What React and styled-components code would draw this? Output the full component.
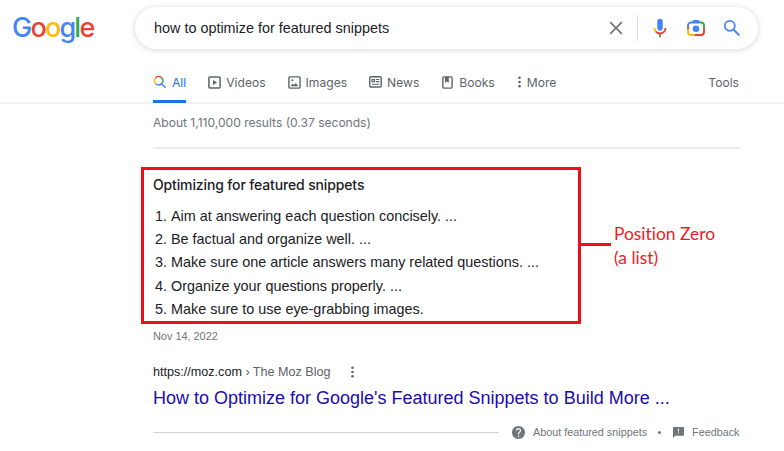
import React from "react";
import styled, { createGlobalStyle } from "styled-components";

const GlobalStyle = createGlobalStyle`
  * {
    box-sizing: border-box;
  }

  body {
    margin: 0;
    background: #fff;
    color: #202124;
    font-family: "Liberation Sans", Arial, sans-serif;
    overflow: hidden;
  }
`;

const Page = styled.div`
  width: 784px;
  height: 451px;
`;

const Header = styled.header`
  height: 104px;
  border-bottom: 2px solid #f0f1f2;
`;

const SearchRow = styled.div`
  display: flex;
  align-items: flex-start;
  padding: 7px 0 0 12px;
`;

const Logo = styled.a`
  width: 123px;
  padding-top: 4px;
  font-family: Inter, sans-serif;
  font-size: 27px;
  font-weight: 500;
  line-height: 34px;
  letter-spacing: -1.8px;
`;

const LogoLetter = styled.span`
  color: ${({ $color }) => $color};
`;

const SearchBar = styled.div`
  display: flex;
  align-items: center;
  width: 623px;
  height: 42px;
  padding: 0 16px 0 19px;
  border-radius: 21px;
  background: #fff;
  box-shadow: 0 1px 5px 1px rgba(64, 60, 67, 0.16);
`;

const Query = styled.span`
  flex: 1;
  font-size: 14.4px;
  white-space: nowrap;
`;

const Divider = styled.span`
  width: 1px;
  height: 26px;
  margin: 0 11px;
  background: #dadce0;
`;

const BarIcon = styled.svg`
  flex: none;
  width: ${({ $size }) => $size || 20}px;
  height: ${({ $size }) => $size || 20}px;
  margin-left: ${({ $gap }) => $gap || 0}px;
`;

const Tabs = styled.nav`
  display: flex;
  align-items: stretch;
  height: 36px;
  margin: 18px 45px 0 153px;
`;

const Tab = styled.a`
  display: flex;
  align-items: center;
  gap: ${({ $gap }) => $gap || 4}px;
  margin-right: ${({ $space }) => $space || 0}px;
  padding-bottom: 3px;
  border-bottom: 3px solid ${({ $active }) => ($active ? "#1a73e8" : "transparent")};
  color: ${({ $active }) => ($active ? "#1a73e8" : "#5f6368")};
  font-family: Inter, sans-serif;
  font-size: 12.1px;
  white-space: nowrap;
`;

const Tools = styled(Tab)`
  margin-left: auto;
`;

const Main = styled.main`
  width: 599px;
  margin-left: 141px;
`;

const Stats = styled.p`
  margin: 0 0 0 12px;
  padding-top: 11px;
  height: 45px;
  border-bottom: 2px solid #ebebeb;
  color: #70757a;
  font-family: Inter, sans-serif;
  font-size: 12.05px;
  line-height: 16px;
`;

const SnippetRow = styled.section`
  display: flex;
  margin-top: 18px;
`;

const Snippet = styled.div`
  width: 440px;
  height: 157px;
  padding: 5px 0 0 9px;
  border: 3px solid #ed1018;
`;

const SnippetTitle = styled.h2`
  margin: 0 0 9.6px;
  font-family: Inter, sans-serif;
  font-size: 14px;
  font-weight: 500;
  line-height: 20px;
  letter-spacing: -0.14px;
`;

const Steps = styled.ol`
  margin: 0;
  padding-left: 18px;
  font-size: 14.4px;
  line-height: 23.4px;
`;

const Connector = styled.span`
  width: 30px;
  height: 3px;
  margin-top: 76px;
  background: #ed1018;
`;

const Callout = styled.p`
  margin: 55px 0 0 3px;
  color: #ed1c24;
  font-family: Lato, sans-serif;
  font-size: 17.4px;
  font-variant-ligatures: none;
  line-height: 23.5px;
  white-space: nowrap;
`;

const Result = styled.article`
  padding-left: 12px;
`;

const PublishDate = styled.div`
  margin-top: 4px;
  color: #70757a;
  font-size: 10.9px;
  line-height: 16px;
`;

const Source = styled.div`
  display: flex;
  align-items: center;
  margin-top: 20px;
  height: 16px;
  color: #5f6368;
  font-size: 12.6px;
  white-space: pre;
`;

const Domain = styled.span`
  color: #202124;
`;

const ResultTitle = styled.h3`
  margin: 7px 0 0;
  color: #1a0dab;
  font-size: 18px;
  font-weight: 400;
  line-height: 22px;
  white-space: nowrap;
`;

const SnippetFooter = styled.footer`
  display: flex;
  align-items: center;
  height: 16px;
  margin-top: 15px;
  color: #70757a;
  font-size: 10.8px;
  white-space: nowrap;
`;

const Rule = styled.span`
  width: 346px;
  height: 1px;
  margin-right: 13px;
  background: #d2d3d8;
`;

const FooterLabel = styled.span`
  margin-left: 8px;
`;

const Dot = styled.span`
  width: 3px;
  height: 3px;
  margin: 0 12px 0 11px;
  border-radius: 50%;
  background: #70757a;
`;

const logoLetters = [
  ["G", "#4285f4"],
  ["o", "#ea4335"],
  ["o", "#fbbc05"],
  ["g", "#4285f4"],
  ["l", "#34a853"],
  ["e", "#ea4335"],
];

const steps = [
  "Aim at answering each question concisely. ...",
  "Be factual and organize well. ...",
  "Make sure one article answers many related questions. ...",
  "Organize your questions properly. ...",
  "Make sure to use eye-grabbing images.",
];

const ClearIcon = () => (
  <BarIcon viewBox="0 0 20 20" fill="none" stroke="#70757a" strokeWidth="1.7">
    <path d="M4.2 4.2l11.6 11.6M15.8 4.2L4.2 15.8" />
  </BarIcon>
);

const MicIcon = () => (
  <BarIcon viewBox="0 0 24 24" $size={22}>
    <path fill="#4285f4" d="M12 15c1.66 0 3-1.31 3-2.97V4.98C15 3.34 13.66 2 12 2S9 3.34 9 4.98v7.05C9 13.69 10.34 15 12 15z" />
    <path fill="#34a853" d="M11 18.08h2V22h-2z" />
    <path fill="#fbbc05" d="M7.05 16.87C5.78 15.59 5 13.83 5 12h2c0 1.45.56 2.42 1.47 3.38v.32l-1.15 1.18z" />
    <path fill="#ea4335" d="M12 16.93a4.97 5.25 0 0 1-3.54-1.55l-1.41 1.49C8.31 18.14 9.99 19 12 19c3.87 0 6.99-2.92 6.99-7H17c0 2.92-2.24 4.93-5 4.93z" />
  </BarIcon>
);

const LensIcon = () => (
  <BarIcon viewBox="0 0 20 20" $gap={15} fill="none" strokeWidth="1.9">
    <path stroke="#4285f4" d="M2 9V7.5a3 3 0 0 1 3-3h9" />
    <path fill="#4285f4" d="M5.5 4.5L7.5 2h5l2 2.5z" />
    <path stroke="#34a853" d="M14 4.5h1a3 3 0 0 1 3 3V10" />
    <path stroke="#ea4335" d="M2 9v2.5" />
    <path stroke="#ea4335" d="M18 10v4a3 3 0 0 1-3 3H9" />
    <path stroke="#fbbc05" d="M2 11.5V14a3 3 0 0 0 3 3h4" />
    <circle cx="10" cy="10.7" r="3.3" fill="#4285f4" />
  </BarIcon>
);

const SearchIcon = () => (
  <BarIcon viewBox="0 0 20 20" $gap={16} fill="none" stroke="#4285f4" strokeWidth="1.8">
    <circle cx="7.8" cy="7.8" r="5" />
    <path d="M11.5 11.5l6 6" />
  </BarIcon>
);

const AllIcon = () => (
  <svg width="14" height="14" viewBox="0 0 14 14" fill="none" strokeWidth="1.5">
    <path stroke="#ea4335" d="M2.6 3A4.2 4.2 0 0 1 8.5 2.6" />
    <path stroke="#fbbc05" d="M2.6 3A4.2 4.2 0 0 0 2.7 8.8" />
    <path stroke="#34a853" d="M8.5 2.6A4.2 4.2 0 0 1 9.1 8" />
    <path stroke="#4285f4" d="M2.7 8.8A4.2 4.2 0 0 0 9.1 8M8.6 8.7l4 4" />
  </svg>
);

const VideoIcon = () => (
  <svg width="13" height="13" viewBox="0 0 13 13" fill="none" stroke="#5f6368" strokeWidth="1.5">
    <rect x="0.9" y="0.9" width="11.2" height="11.2" rx="1" />
    <path d="M5 4v5l4-2.5z" fill="#5f6368" stroke="none" />
  </svg>
);

const ImageIcon = () => (
  <svg width="13" height="13" viewBox="0 0 13 13" fill="none" stroke="#5f6368" strokeWidth="1.4">
    <rect x="0.9" y="0.9" width="11.2" height="11.2" rx="1" />
    <path d="M2.6 10.2l2-2.6 1.5 1.5 1.7-2.2 2.6 3.3z" fill="#5f6368" stroke="none" />
    <circle cx="4.3" cy="4.3" r="1" fill="#5f6368" stroke="none" />
  </svg>
);

const NewsIcon = () => (
  <svg width="13" height="12" viewBox="0 0 13 12" fill="none" stroke="#5f6368" strokeWidth="1.4">
    <rect x="0.8" y="0.8" width="11.4" height="10.2" rx="1" />
    <path d="M3 3.6h2.6v2H3zM7 3.5h3.4M7 5.6h3.4M3 8.3h7.4" strokeWidth="1.1" />
  </svg>
);

const BookIcon = () => (
  <svg width="11" height="13" viewBox="0 0 11 13" fill="none" stroke="#5f6368" strokeWidth="1.4">
    <rect x="0.9" y="0.9" width="9.2" height="11.2" rx="1" />
    <path d="M3 1h3.8v5.8L4.9 5.4 3 6.8z" fill="#5f6368" stroke="none" />
  </svg>
);

const DotsIcon = ({ className }) => (
  <svg className={className} width="3" height="12" viewBox="0 0 3 12" fill="#5f6368">
    <circle cx="1.5" cy="1.8" r="1.3" />
    <circle cx="1.5" cy="6" r="1.3" />
    <circle cx="1.5" cy="10.2" r="1.3" />
  </svg>
);

const SourceMenu = styled(DotsIcon)`
  margin-left: 20px;
`;

const HelpIcon = () => (
  <svg width="13" height="13" viewBox="2 2 20 20" fill="#70757a">
    <path d="M12 2C6.48 2 2 6.48 2 12s4.48 10 10 10 10-4.48 10-10S17.52 2 12 2zm1 17h-2v-2h2v2zm2.07-7.75l-.9.92C13.45 12.9 13 13.5 13 15h-2v-.5c0-1.1.45-2.1 1.17-2.83l1.24-1.26c.37-.36.59-.86.59-1.41 0-1.1-.9-2-2-2s-2 .9-2 2H8c0-2.21 1.79-4 4-4s4 1.79 4 4c0 .88-.36 1.68-.93 2.25z" />
  </svg>
);

const FeedbackIcon = () => (
  <svg width="11" height="11" viewBox="2 2 20 20" fill="#70757a">
    <path d="M20 2H4c-1.1 0-2 .9-2 2v18l4-4h14c1.1 0 2-.9 2-2V4c0-1.1-.9-2-2-2zm-7 12h-2v-2h2v2zm0-4h-2V5h2v5z" />
  </svg>
);

const App = () => {
  return (
    <Page>
      <GlobalStyle />
      <Header>
        <SearchRow>
          <Logo>
            {logoLetters.map(([letter, color], index) => (
              <LogoLetter key={index} $color={color}>
                {letter}
              </LogoLetter>
            ))}
          </Logo>
          <SearchBar>
            <Query>how to optimize for featured snippets</Query>
            <ClearIcon />
            <Divider />
            <MicIcon />
            <LensIcon />
            <SearchIcon />
          </SearchBar>
        </SearchRow>
        <Tabs>
          <Tab $active $gap={5} $space={22}>
            <AllIcon />
            All
          </Tab>
          <Tab $gap={5} $space={22}>
            <VideoIcon />
            Videos
          </Tab>
          <Tab $gap={5} $space={22}>
            <ImageIcon />
            Images
          </Tab>
          <Tab $gap={5} $space={23}>
            <NewsIcon />
            News
          </Tab>
          <Tab $gap={6} $space={23}>
            <BookIcon />
            Books
          </Tab>
          <Tab $gap={6}>
            <DotsIcon />
            More
          </Tab>
          <Tools>Tools</Tools>
        </Tabs>
      </Header>
      <Main>
        <Stats>About 1,110,000 results (0.37 seconds)</Stats>
        <SnippetRow>
          <Snippet>
            <SnippetTitle>Optimizing for featured snippets</SnippetTitle>
            <Steps>
              {steps.map((step) => (
                <li key={step}>{step}</li>
              ))}
            </Steps>
          </Snippet>
          <Connector />
          <Callout>
            Position Zero
            <br />
            (a list)
          </Callout>
        </SnippetRow>
        <Result>
          <PublishDate>Nov 14, 2022</PublishDate>
          <Source>
            <Domain>https://moz.com</Domain> › The Moz Blog
            <SourceMenu />
          </Source>
          <ResultTitle>
            How to Optimize for Google's Featured Snippets to Build More ...
          </ResultTitle>
          <SnippetFooter>
            <Rule />
            <HelpIcon />
            <FooterLabel>About featured snippets</FooterLabel>
            <Dot />
            <FeedbackIcon />
            <FooterLabel>Feedback</FooterLabel>
          </SnippetFooter>
        </Result>
      </Main>
    </Page>
  );
};

export default App;
